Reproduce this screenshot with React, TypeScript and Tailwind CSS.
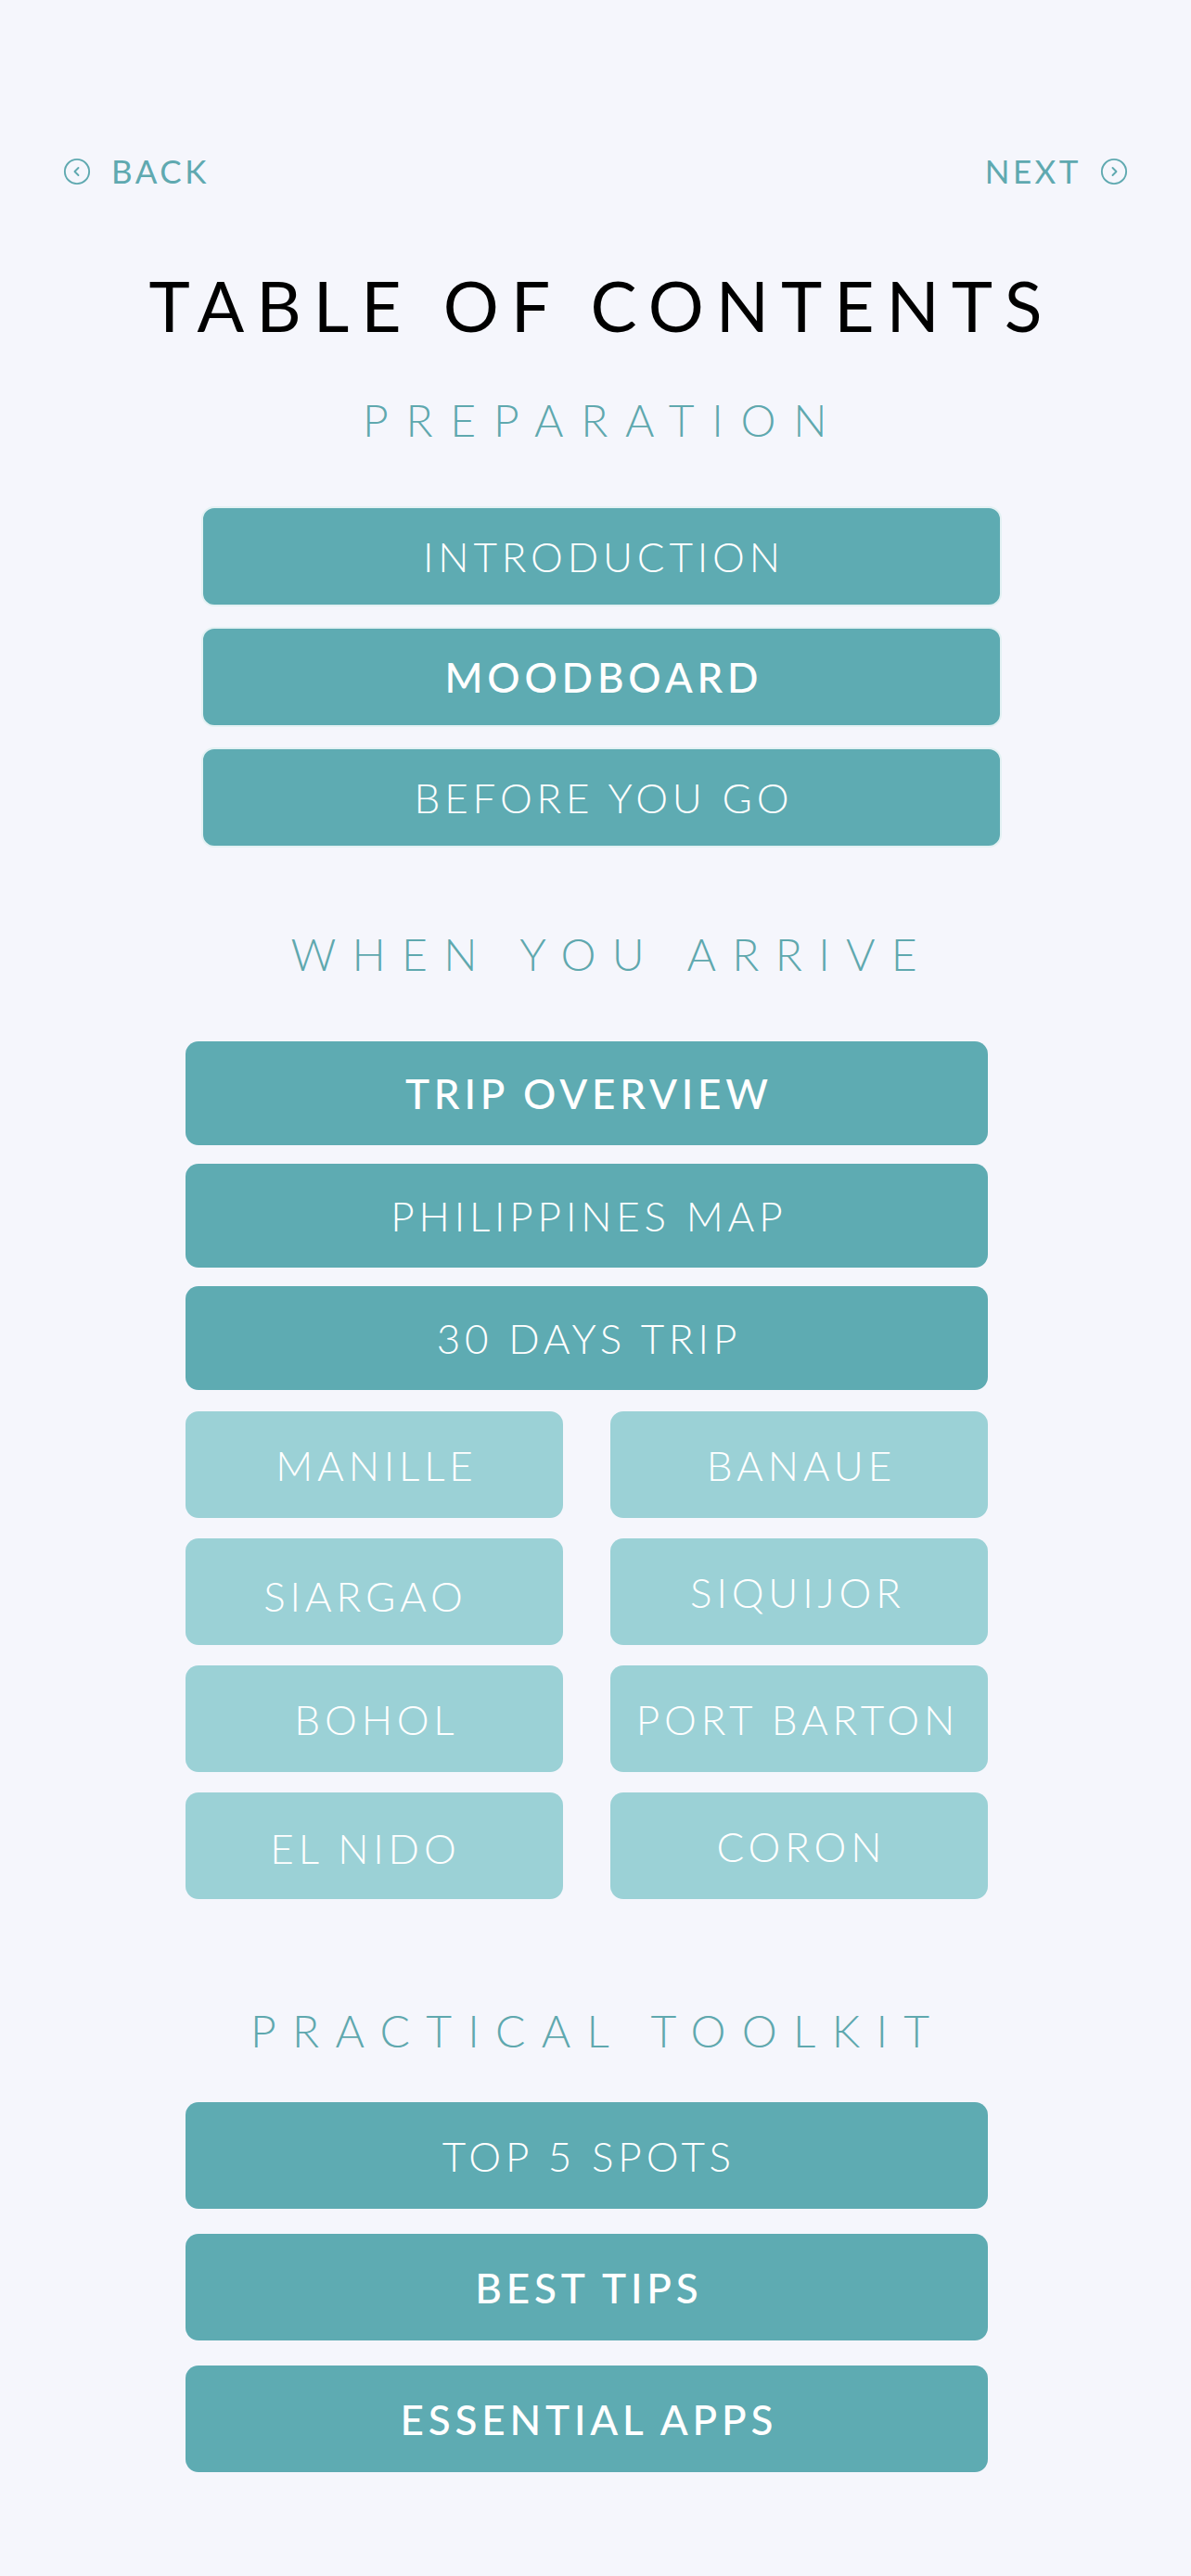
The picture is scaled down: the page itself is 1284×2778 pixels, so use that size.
import React from "react";

const FONT = { fontFamily: '"Lato", "Open Sans", sans-serif' };

type Item = { label: string; strong?: boolean; nudge?: string };

const PREP: Item[] = [
  { label: "INTRODUCTION" },
  { label: "MOODBOARD", strong: true },
  { label: "BEFORE YOU GO" },
];

const ARRIVE: Item[] = [
  { label: "TRIP OVERVIEW", strong: true },
  { label: "PHILIPPINES MAP" },
  { label: "30 DAYS TRIP" },
];

const PLACES: Item[] = [
  { label: "MANILLE" },
  { label: "BANAUE" },
  { label: "SIARGAO", nudge: "pr-6 pt-2" },
  { label: "SIQUIJOR", nudge: "pr-2" },
  { label: "BOHOL" },
  { label: "PORT BARTON", nudge: "pr-2" },
  { label: "EL NIDO", nudge: "pr-6 pt-1" },
  { label: "CORON" },
];

const TOOLKIT: Item[] = [
  { label: "TOP 5 SPOTS" },
  { label: "BEST TIPS", strong: true },
  { label: "ESSENTIAL APPS", strong: true },
];

function CircleChevron({ dir }: { dir: "left" | "right" }) {
  return (
    <svg width="30" height="30" viewBox="0 0 24 24" fill="none" stroke="#5fa9b0" strokeWidth="1.5" strokeLinecap="round" strokeLinejoin="round">
      <circle cx="12" cy="12" r="10.5" />
      {dir === "left" ? <path d="M13.2 8.8 10 12l3.2 3.2" /> : <path d="M10.8 8.8 14 12l-3.2 3.2" />}
    </svg>
  );
}

function Heading({ children, className = "" }: { children: React.ReactNode; className?: string }) {
  return (
    <h2 className={`text-center text-[48px] leading-none font-light tracking-[0.36em] pl-[0.36em] text-[#5fa8ae] ${className}`}>
      {children}
    </h2>
  );
}

function Button({ item, className = "" }: { item: Item; className?: string }) {
  return (
    <div
      className={`flex items-center justify-center rounded-[14px] text-[44px] leading-none tracking-[0.11em] pl-[0.11em] text-white ${
        item.strong ? "font-medium" : "font-light"
      } ${className}`}
    >
      <span className={item.nudge ?? ""}>{item.label}</span>
    </div>
  );
}

export default function App() {
  return (
    <div className="w-[1284px] min-h-[2778px] bg-[#f5f6fc] pt-[167px] pb-[140px]" style={FONT}>
      {/* back / next */}
      <div className="flex items-center justify-between px-[68px] text-[35px] leading-none tracking-[0.1em] text-[#5fa9b0]">
        <div className="flex items-center gap-[22px]">
          <CircleChevron dir="left" />
          <span>BACK</span>
        </div>
        <div className="flex items-center gap-[20px]">
          <span>NEXT</span>
          <CircleChevron dir="right" />
        </div>
      </div>

      <h1 className="mt-[90px] text-center text-[75px] leading-none font-normal tracking-[0.173em] pl-[0.173em] text-black">
        TABLE OF CONTENTS
      </h1>

      <Heading className="mt-[62px] tracking-[0.39em]">PREPARATION</Heading>

      <div className="ml-[217px] mt-[69px] flex w-[863px] flex-col gap-[22px]">
        {PREP.map((item) => (
          <Button key={item.label} item={item} className="h-[108px] border-2 border-[#e3f1f3] bg-[#5eabb2]" />
        ))}
      </div>

      <Heading className="mt-[91px] ml-[18px]">WHEN YOU ARRIVE</Heading>

      <div className="ml-[200px] mt-[70px] flex w-[865px] flex-col gap-5">
        {ARRIVE.map((item) => (
          <Button key={item.label} item={item} className="h-[112px] bg-[#5eabb2]" />
        ))}
        <div className="mt-[3px] grid grid-cols-2 gap-x-[51px] gap-y-[22px]">
          {PLACES.map((item) => (
            <Button key={item.label} item={item} className="h-[115px] bg-[#9bd1d6]" />
          ))}
        </div>
      </div>

      <Heading className="mt-[118px] mr-[12px]">PRACTICAL TOOLKIT</Heading>

      <div className="ml-[200px] mt-[53px] flex w-[865px] flex-col gap-[27px]">
        {TOOLKIT.map((item) => (
          <Button key={item.label} item={item} className="h-[115px] bg-[#5eabb2]" />
        ))}
      </div>
    </div>
  );
}
